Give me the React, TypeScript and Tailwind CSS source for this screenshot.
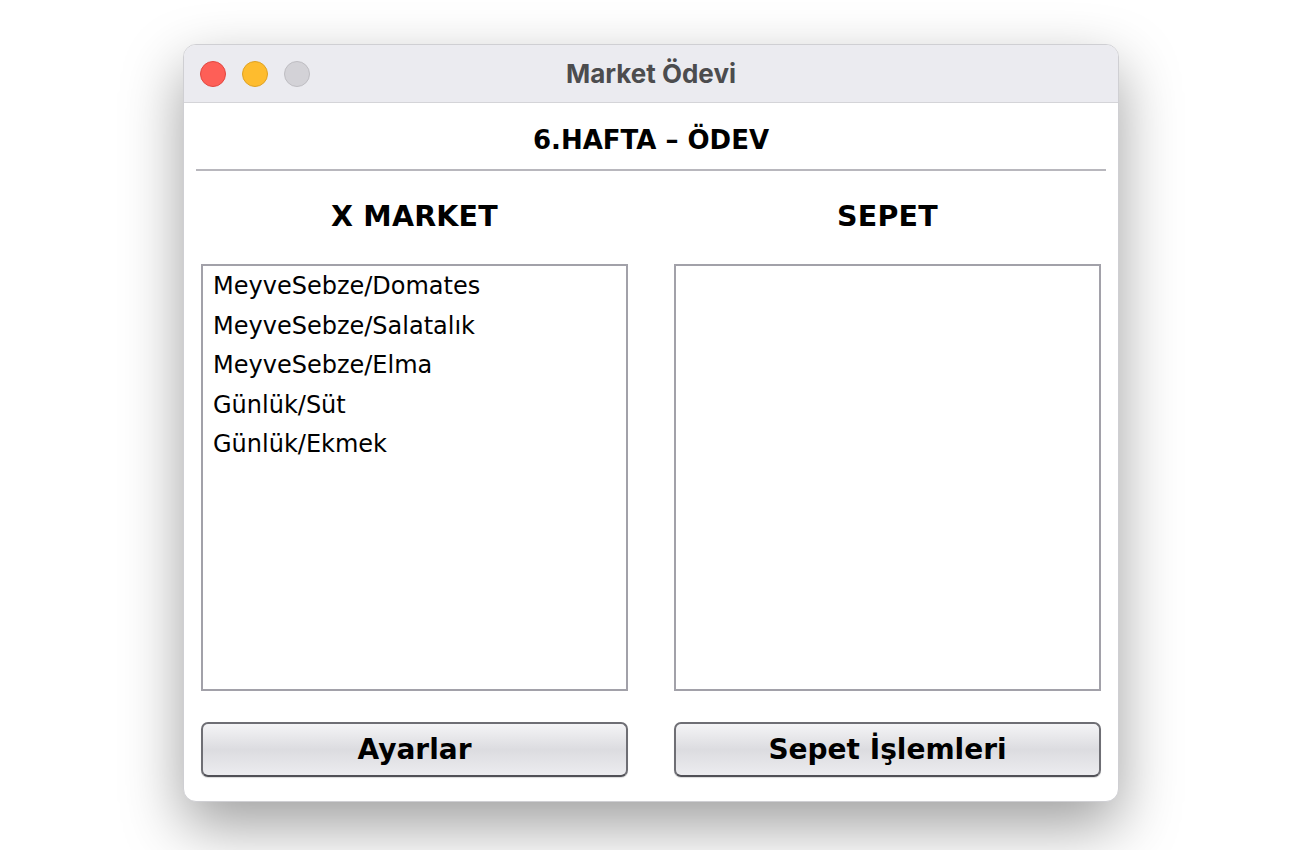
const products = [
  'MeyveSebze/Domates',
  'MeyveSebze/Salatalık',
  'MeyveSebze/Elma',
  'Günlük/Süt',
  'Günlük/Ekmek',
];

const uiFont = { fontFamily: '"DejaVu Sans", "Noto Sans", sans-serif' };

function TrafficLights() {
  return (
    <div className="flex items-center gap-[16px] pl-[16px]">
      <span className="w-[26px] h-[26px] rounded-full bg-[#fe5f57] border border-[#e2463f]" />
      <span className="w-[26px] h-[26px] rounded-full bg-[#febc2e] border border-[#dea123]" />
      <span className="w-[26px] h-[26px] rounded-full bg-[#d3d2d7] border border-[#bebdc2]" />
    </div>
  );
}

function Column({ title, items, button }: { title: string; items: string[]; button: string }) {
  return (
    <div className="flex flex-col w-[427px]">
      <div className="h-[93px] flex items-center justify-center">
        <h2 className="text-[28.5px] font-bold text-black tracking-[0.2px]" style={uiFont}>
          {title}
        </h2>
      </div>
      <ul className="h-[427px] border-2 border-[#a2a1a9] bg-white pt-[4px] pl-[10px]">
        {items.map((item) => (
          <li key={item} className="h-[39.5px] text-[24px] leading-[32px] text-black" style={uiFont}>
            {item}
          </li>
        ))}
      </ul>
      <button
        className="mt-[31px] h-[55px] rounded-[7px] border-2 border-[#6e6e74] border-b-[#505056] bg-gradient-to-b from-[#f4f4f6] via-[#dcdce0] to-[#ececef] shadow-[0_1px_1px_rgba(0,0,0,0.15)] text-[28px] font-bold text-black"
        style={uiFont}
      >
        {button}
      </button>
    </div>
  );
}

export default function App() {
  return (
    <div className="w-[1300px] h-[850px] bg-white overflow-hidden pt-[44px]">
      <div className="ml-[183px] w-[936px] rounded-[13px] bg-white border border-[#cfcfd3] shadow-[0_24px_60px_rgba(0,0,0,0.38)] overflow-hidden">
        <div className="relative h-[58px] bg-[#ebebf0] border-b border-[#d4d4d8] flex items-center">
          <TrafficLights />
          <div className="absolute inset-0 flex items-center justify-center">
            <span className="text-[26px] font-bold text-[#4c4c4e]" style={{ fontFamily: 'Inter, "Noto Sans", sans-serif' }}>
              Market Ödevi
            </span>
          </div>
        </div>
        <div className="h-[66px] flex items-center justify-center pt-[8px]">
          <h1 className="text-[26px] font-bold text-black" style={uiFont}>
            6.HAFTA – ÖDEV
          </h1>
        </div>
        <div className="mx-[12px] h-[2px] bg-[#b8b7bd]" />
        <div className="flex justify-between px-[17px] pb-[24px]">
          <Column title="X MARKET" items={products} button="Ayarlar" />
          <Column title="SEPET" items={[]} button="Sepet İşlemleri" />
        </div>
      </div>
    </div>
  );
}
